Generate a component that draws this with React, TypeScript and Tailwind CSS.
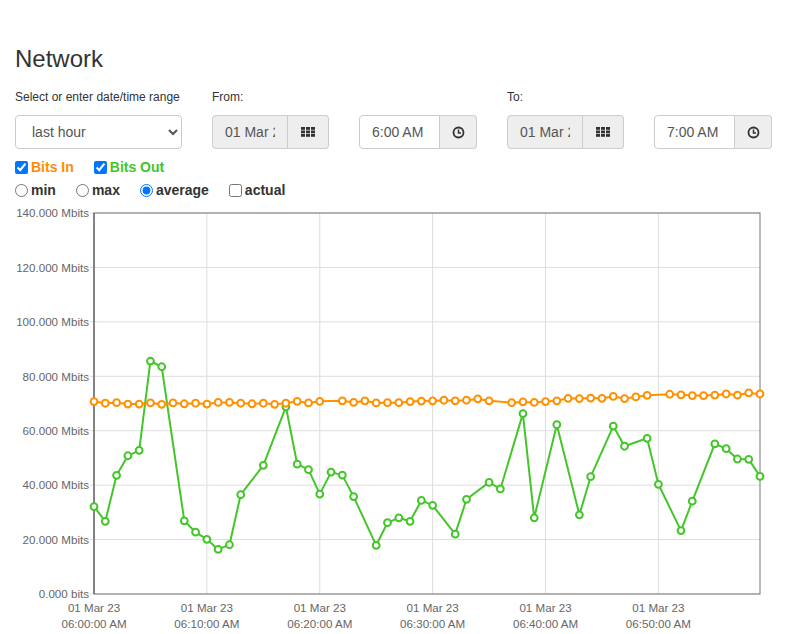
import { useState } from "react"

// Chart geometry (page coordinates, svg viewBox matches page)
const PLOT = { left: 94, right: 760, top: 213, bottom: 594 }
const MAX_MBITS = 140
const POINTS = 60

const bitsOut: (number | null)[] = [
  32.1, 26.7, 43.6, 50.8, 52.8, 85.6, 83.5, null, 26.9, 22.7,
  20.1, 16.4, 18.1, 36.5, null, 47.3, null, 68.8, 47.7, 45.7,
  36.7, 44.8, 43.7, 35.8, null, 17.9, 26.2, 28.0, 26.7, 34.4,
  32.6, null, 22.0, 34.8, null, 41.0, 38.6, null, 66.3, 28.0,
  null, 62.2, null, 29.1, 43.1, null, 61.7, 54.3, null, 57.2,
  40.3, null, 23.3, 34.1, null, 55.2, 53.4, 49.6, 49.5, 43.2,
]

const bitsIn: (number | null)[] = [
  70.7, 70.1, 70.3, 69.8, 69.8, 70.2, 69.7, 70.2, 69.9, 70.1,
  69.8, 70.4, 70.4, 70.1, 69.9, 70.1, 69.7, 70.1, 70.8, 70.2,
  70.8, null, 71.0, 70.4, 71.0, 70.2, 70.3, 70.3, 70.7, 70.9,
  71.0, 71.2, 71.0, 71.2, 71.7, 71.0, null, 70.3, 70.6, 70.4,
  70.7, 71.0, 71.9, 71.8, 72.0, 71.9, 72.6, 71.8, 72.4, 73.0,
  null, 73.4, 73.2, 72.9, 72.9, 73.1, 73.5, 73.1, 73.9, 73.5,
]

const yTicks = [
  "0.000 bits", "20.000 Mbits", "40.000 Mbits", "60.000 Mbits",
  "80.000 Mbits", "100.000 Mbits", "120.000 Mbits", "140.000 Mbits",
]
const xTicks = ["06:00:00 AM", "06:10:00 AM", "06:20:00 AM", "06:30:00 AM", "06:40:00 AM", "06:50:00 AM"]

const xOf = (i: number) => PLOT.left + (i * (PLOT.right - PLOT.left)) / (POINTS - 1)
const yOf = (v: number) => PLOT.bottom - (v * (PLOT.bottom - PLOT.top)) / MAX_MBITS

const Series = ({ data, color }: { data: (number | null)[]; color: string }) => {
  const pts = data
    .map((v, i) => (v === null ? null : { x: xOf(i), y: yOf(v) }))
    .filter((p): p is { x: number; y: number } => p !== null)
  const d = pts.map((p, i) => `${i === 0 ? "M" : "L"}${p.x.toFixed(1)} ${p.y.toFixed(1)}`).join(" ")
  return (
    <g>
      <path d={d} fill="none" stroke={color} strokeWidth={2} strokeLinejoin="round" />
      {pts.map((p, i) => (
        <circle key={i} cx={p.x} cy={p.y} r={3.4} fill="#fff" stroke={color} strokeWidth={2} />
      ))}
    </g>
  )
}

const GridIcon = () => (
  <svg width="14" height="10" viewBox="0 0 14 10" fill="#333">
    {[0, 1, 2].map((r) =>
      [0, 1, 2].map((c) => <rect key={`${r}${c}`} x={c * 5} y={r * 3.5} width={4} height={2.8} />)
    )}
  </svg>
)

const ClockIcon = () => (
  <svg width="13" height="13" viewBox="0 0 13 13" fill="none" stroke="#333">
    <circle cx="6.5" cy="6.5" r="5" strokeWidth="1.8" />
    <path d="M6.5 3.6 V6.9 H9" strokeWidth="1.5" />
  </svg>
)

const DateGroup = ({ value }: { value: string }) => (
  <div className="flex h-[34px] w-[117px]">
    <input
      readOnly
      value={value}
      className="w-[76px] min-w-0 rounded-l-[4px] border border-[#ccc] bg-[#eee] px-3 text-[14px] text-[#555] outline-none"
    />
    <span className="flex w-[41px] items-center justify-center rounded-r-[4px] border border-l-0 border-[#ccc] bg-[#eee]">
      <GridIcon />
    </span>
  </div>
)

const TimeGroup = ({ value }: { value: string }) => (
  <div className="flex h-[34px] w-[118px]">
    <input
      readOnly
      value={value}
      className="w-[81px] min-w-0 rounded-l-[4px] border border-[#ccc] bg-white px-3 text-[14px] text-[#555] outline-none"
    />
    <span className="flex w-[37px] items-center justify-center rounded-r-[4px] border border-l-0 border-[#ccc] bg-[#eee]">
      <ClockIcon />
    </span>
  </div>
)

export default function App() {
  const [range, setRange] = useState("hour")
  const [showIn, setShowIn] = useState(true)
  const [showOut, setShowOut] = useState(true)
  const [mode, setMode] = useState("average")
  const [actual, setActual] = useState(false)

  return (
    <div className="min-h-[634px] bg-white px-[15px] font-['Liberation_Sans',Arial,sans-serif] text-[#333]">
      <h1 className="pt-[46px] text-[24px] leading-[26px]">Network</h1>

      {/* Range selection */}
      <div className="mt-[17px] flex">
        <div className="w-[167px]">
          <label className="block h-[17px] text-[12px] leading-[17px]">Select or enter date/time range</label>
          <select
            value={range}
            onChange={(e) => setRange(e.target.value)}
            className="mt-[9px] h-[34px] w-full rounded-[4px] border border-[#ccc] bg-white px-3 text-[14px] text-[#555] outline-none"
          >
            <option value="hour">last hour</option>
            <option value="day">last day</option>
            <option value="week">last week</option>
          </select>
        </div>
        <div className="ml-[30px]">
          <label className="block h-[17px] text-[12px] leading-[17px]">From:</label>
          <div className="mt-[9px] flex gap-[30px]">
            <DateGroup value="01 Mar 2023" />
            <TimeGroup value="6:00 AM" />
          </div>
        </div>
        <div className="ml-[30px]">
          <label className="block h-[17px] text-[12px] leading-[17px]">To:</label>
          <div className="mt-[9px] flex gap-[30px]">
            <DateGroup value="01 Mar 2023" />
            <TimeGroup value="7:00 AM" />
          </div>
        </div>
      </div>

      {/* Series toggles */}
      <div className="mt-[8px] flex h-[20px] items-center gap-5 text-[14px] font-bold leading-[20px]">
        <label className="flex items-center gap-[3px]">
          <input type="checkbox" checked={showIn} onChange={() => setShowIn(!showIn)} className="h-[13px] w-[13px]" />
          <span className="text-[#ff8c00]">Bits In</span>
        </label>
        <label className="flex items-center gap-[3px]">
          <input type="checkbox" checked={showOut} onChange={() => setShowOut(!showOut)} className="h-[13px] w-[13px]" />
          <span className="text-[#44c62a]">Bits Out</span>
        </label>
      </div>
      <div className="mt-[3px] flex h-[20px] items-center gap-5 text-[14px] font-bold leading-[20px]">
        {["min", "max", "average"].map((m) => (
          <label key={m} className="flex items-center gap-[3px]">
            <input type="radio" name="mode" checked={mode === m} onChange={() => setMode(m)} className="h-[13px] w-[13px]" />
            <span>{m}</span>
          </label>
        ))}
        <label className="flex items-center gap-[3px]">
          <input type="checkbox" checked={actual} onChange={() => setActual(!actual)} className="h-[13px] w-[13px]" />
          <span>actual</span>
        </label>
      </div>

      {/* Chart */}
      <svg
        width="757"
        height="431"
        viewBox="15 203 757 431"
        className="mt-[3px] block"
        fontFamily="'Liberation Sans', Arial, sans-serif"
      >
        {yTicks.map((label, i) => {
          const y = yOf(i * 20)
          return (
            <g key={label}>
              <line x1={90} x2={PLOT.right} y1={y} y2={y} stroke="#ddd" />
              <text x={89} y={y + 4.3} textAnchor="end" fontSize="11.6" fill="#666">
                {label}
              </text>
            </g>
          )
        })}
        {xTicks.map((label, i) => {
          const x = PLOT.left + i * ((PLOT.right - PLOT.left) * 10) / (POINTS - 1)
          return (
            <g key={label}>
              <line x1={x} x2={x} y1={PLOT.top} y2={PLOT.bottom} stroke="#ddd" />
              <text x={x} y={611.7} textAnchor="middle" fontSize="11.6" fill="#666">
                01 Mar 23
              </text>
              <text x={x} y={628.3} textAnchor="middle" fontSize="11.6" fill="#666">
                {label}
              </text>
            </g>
          )
        })}
        <rect
          x={PLOT.left}
          y={PLOT.top}
          width={PLOT.right - PLOT.left}
          height={PLOT.bottom - PLOT.top}
          fill="none"
          stroke="#777"
        />
        <line x1={PLOT.left} x2={PLOT.left} y1={PLOT.top} y2={PLOT.bottom} stroke="#555" />
        {showOut && <Series data={bitsOut} color="#44c62a" />}
        {showIn && <Series data={bitsIn} color="#ff9100" />}
      </svg>
    </div>
  )
}
